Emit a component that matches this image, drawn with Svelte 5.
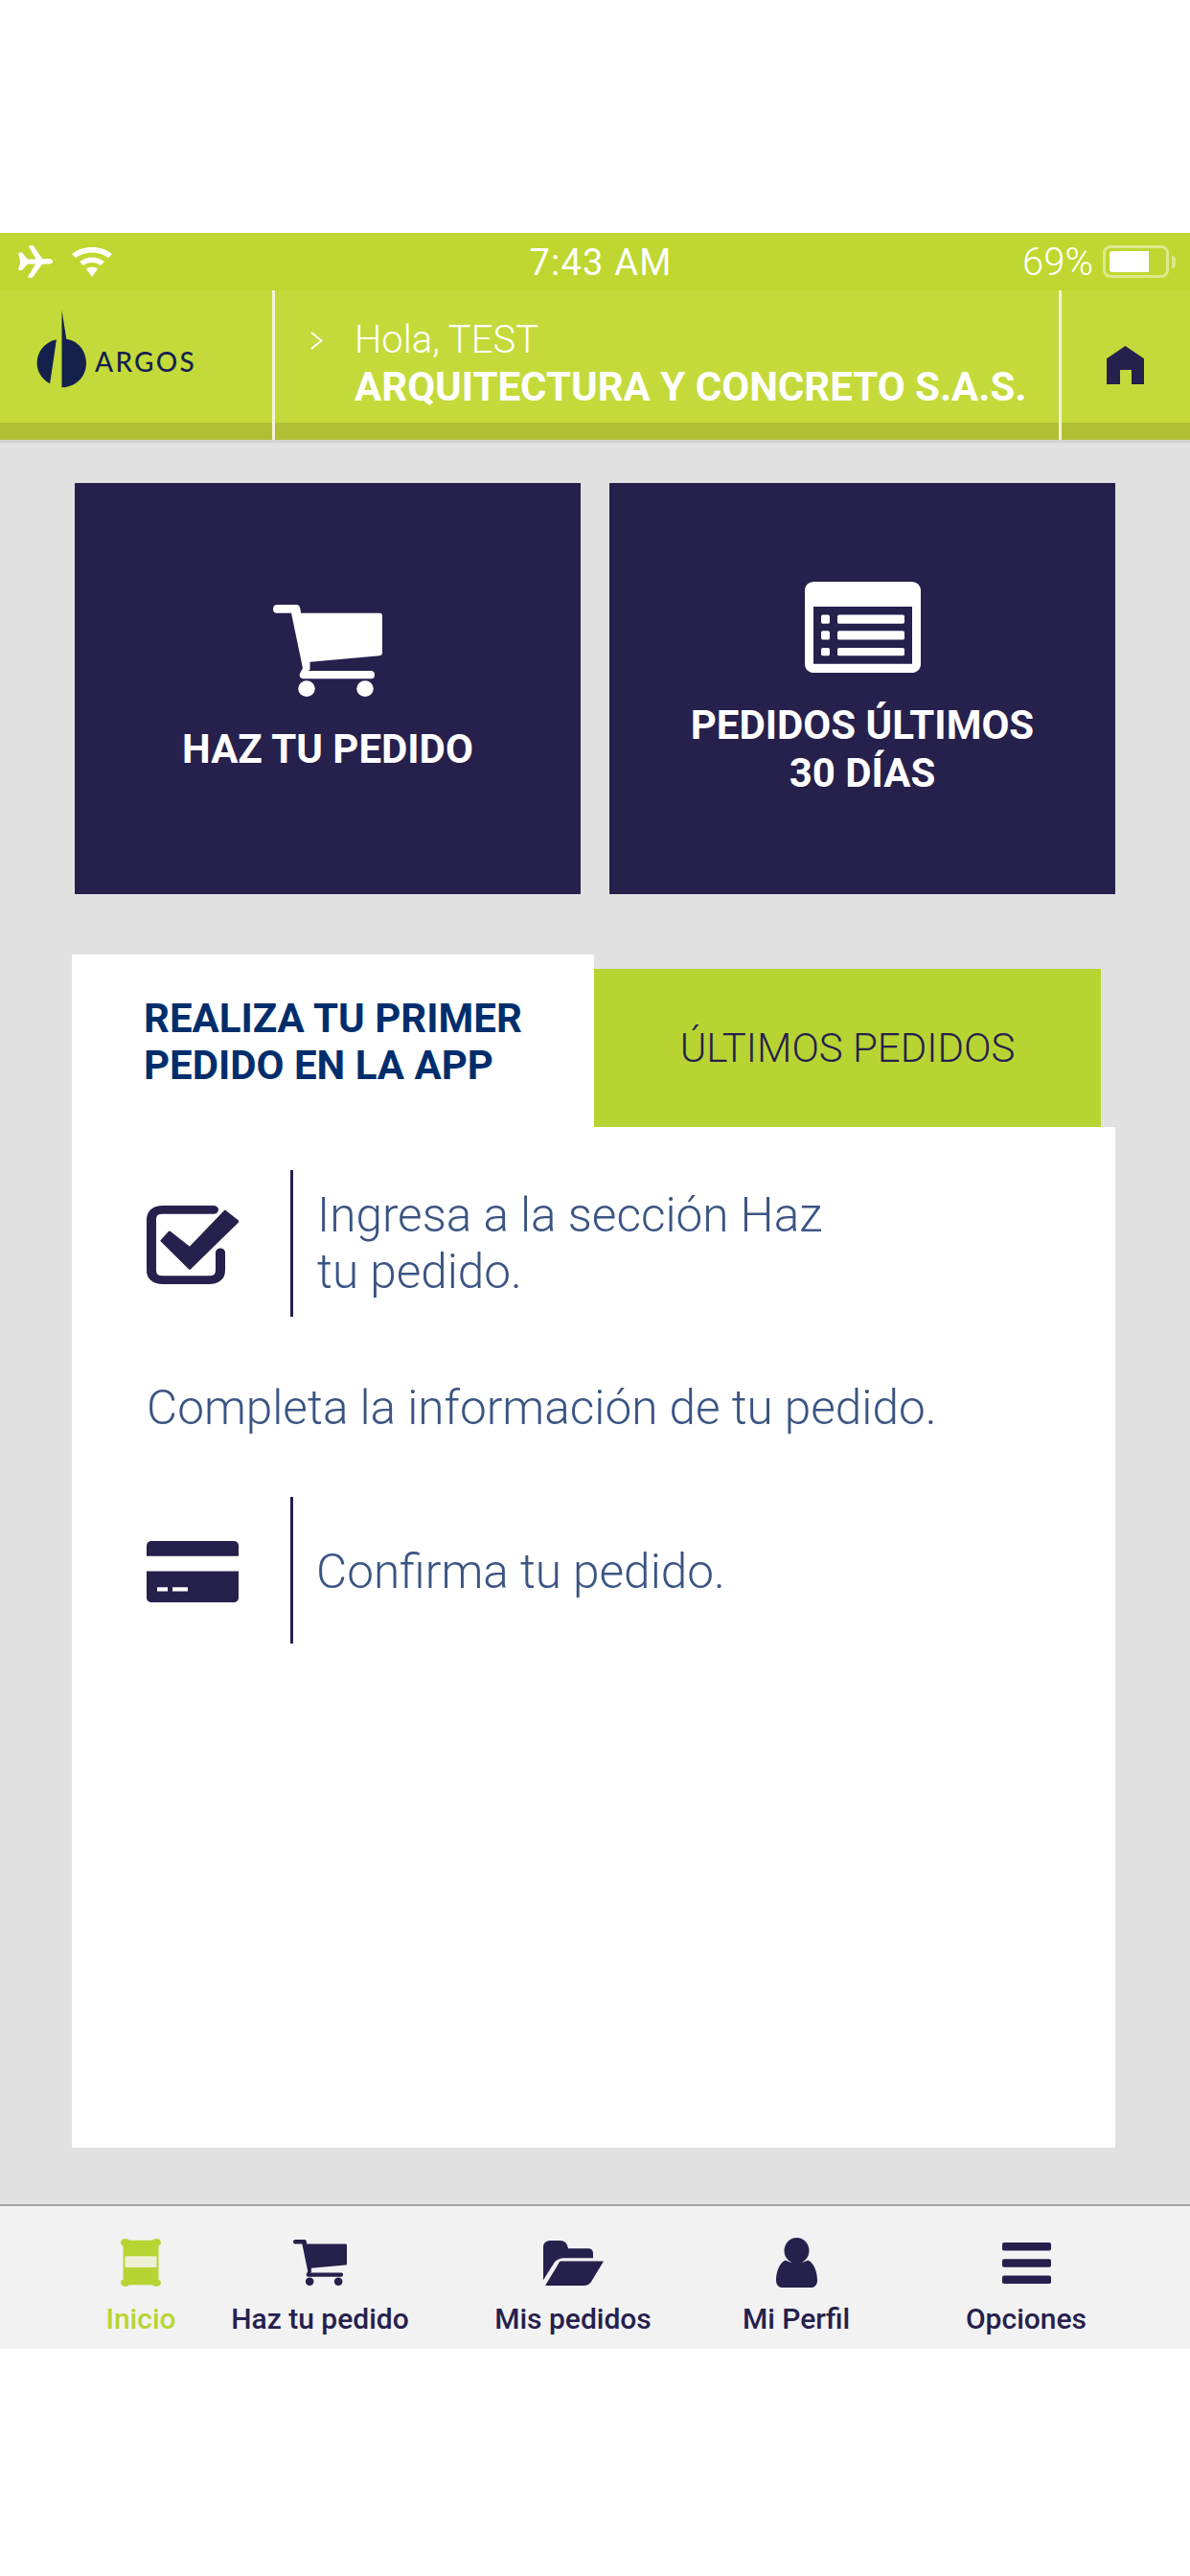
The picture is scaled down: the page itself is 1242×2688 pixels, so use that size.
<script>
  const tabs = [
    { label: 'Inicio', icon: 'bag', active: true },
    { label: 'Haz tu pedido', icon: 'cart' },
    { label: 'Mis pedidos', icon: 'folder' },
    { label: 'Mi Perfil', icon: 'user' },
    { label: 'Opciones', icon: 'menu' }
  ];
</script>

{#snippet cartIcon(cls)}
  <svg class={cls} viewBox="0 0 114 103" preserveAspectRatio="none" aria-hidden="true">
    <path fill="currentColor" d="M4 0H24C27 0 28 2 28.500 5L29 9.500H111C113 9.500 114 11 114 12.500V54C114 56 113 56.500 111 57L38.500 64V73L36 74H102C105 74 106 76 106 78.500C106 81 105 83 102 83H33C28 83 26.500 80 28.500 76L31 71L19 9.500H4C1.500 9.500 0 7.500 0 4.800C0 2 1.500 0 4 0Z"/>
    <ellipse fill="currentColor" cx="35" cy="94" rx="8.800" ry="9"/>
    <ellipse fill="currentColor" cx="96" cy="94" rx="8.800" ry="9"/>
  </svg>
{/snippet}

<div class="screen">
  <div class="top-blank"></div>

  <div class="status">
    <div class="status-left">
      <svg class="plane" viewBox="0 0 38 40" preserveAspectRatio="none" aria-hidden="true">
        <path fill="#fff" d="M1 9.500L5 8.500L11 17H20L12 0.500L17 0L27 16.500H34C36.500 16.500 38 18 38 19.800C38 21.800 36.500 23 34 23H27L16 40L11 39.500L19.500 23H11L5 31L1 30L3.500 20Z"/>
      </svg>
      <svg class="wifi" viewBox="0 0 42 37" preserveAspectRatio="none" aria-hidden="true">
        <path fill="#fff" d="M21 0C29 0 36.500 3 42 8.500L38 13.500C33.500 9 27.500 6.500 21 6.500C14.500 6.500 8.500 9 4 13.500L0 8.500C5.500 3 13 0 21 0Z"/>
        <path fill="#fff" d="M21 12.500C26 12.500 30.500 14.500 34 18L30 22.800C27.500 20.300 24.500 19 21 19C17.500 19 14.500 20.300 12 22.800L8 18C11.500 14.500 16 12.500 21 12.500Z"/>
        <path fill="#fff" d="M21 24.500C23.500 24.500 25.500 25.500 27 27L21 37L15 27C16.500 25.500 18.500 24.500 21 24.500Z"/>
      </svg>
    </div>
    <div class="time">7:43 AM</div>
    <div class="status-right">
      <span class="pct">69%</span>
      <span class="battery"><span class="battery-fill"></span></span>
      <span class="nub"></span>
    </div>
  </div>

  <header class="header">
    <div class="logo">
      <svg class="mark" viewBox="95 275 138 252" preserveAspectRatio="none" aria-hidden="true">
        <path fill="#14214d" d="M164 280L176 370C205 375 228 405 228 445C228 490 200 520 164 522Z"/>
        <path fill="#14214d" d="M150 372L133 510C110 495 99 470 99 445C99 410 120 380 150 372Z"/>
      </svg>
      <span class="wordmark">ARGOS</span>
    </div>
    <div class="greeting">
      <svg class="chev" viewBox="0 0 13 19" preserveAspectRatio="none" aria-hidden="true">
        <path fill="none" stroke="#fff" stroke-width="2" d="M1 1L11.500 9.500L1 18"/>
      </svg>
      <div class="names">
        <div class="hola">Hola, TEST</div>
        <div class="company">ARQUITECTURA Y CONCRETO S.A.S.</div>
      </div>
    </div>
    <div class="home">
      <svg class="home-icon" viewBox="0 0 39 48" preserveAspectRatio="none" aria-hidden="true">
        <path fill="#26204c" d="M19.500 0L39 16V48H26V30H14V48H0V16Z"/>
      </svg>
    </div>
  </header>
  <div class="header-shadow"></div>

  <main class="content">
    <div class="cards">
      <div class="card">
        {@render cartIcon('card-cart')}
        <div class="card-label">HAZ TU PEDIDO</div>
      </div>
      <div class="card">
        <svg class="card-list" viewBox="0 0 121 102" preserveAspectRatio="none" aria-hidden="true">
          <path fill="#fff" fill-rule="evenodd" d="M10 0H111C117 0 121 4 121 10V92C121 98 117 102 111 102H10C4 102 0 98 0 92V10C0 4 4 0 10 0ZM9 28V92H112V28Z"/>
          <rect fill="#fff" x="17" y="37" width="9" height="10" rx="2"/>
          <rect fill="#fff" x="34" y="37" width="70" height="10" rx="2"/>
          <rect fill="#fff" x="17" y="55" width="9" height="10" rx="2"/>
          <rect fill="#fff" x="34" y="55" width="70" height="10" rx="2"/>
          <rect fill="#fff" x="17" y="74" width="9" height="9" rx="2"/>
          <rect fill="#fff" x="34" y="74" width="70" height="9" rx="2"/>
        </svg>
        <div class="card-label">PEDIDOS ÚLTIMOS<br />30 DÍAS</div>
      </div>
    </div>

    <div class="tabs">
      <div class="tab tab-active">REALIZA TU PRIMER<br />PEDIDO EN LA APP</div>
      <div class="tab tab-other">ÚLTIMOS PEDIDOS</div>
    </div>

    <section class="panel">
      <div class="step">
        <svg class="step-icon check" viewBox="0 0 96 94" preserveAspectRatio="none" aria-hidden="true">
          <path fill="none" stroke="#26204c" stroke-width="10" stroke-linecap="round" d="M70 5H17C9 5 5 9 5 17V77C5 85 9 89 17 89H65C73 89 77 85 77 77V56"/>
          <path fill="#26204c" stroke="#26204c" stroke-width="3" stroke-linejoin="round" d="M16 42L24 32L45 51L82 7L95 19L45 75Z"/>
        </svg>
        <div class="rule"></div>
        <p class="step-text">Ingresa a la sección Haz<br />tu pedido.</p>
      </div>
      <p class="step-plain">Completa la información de tu pedido.</p>
      <div class="step step-last">
        <svg class="step-icon pay" viewBox="0 0 96 73" preserveAspectRatio="none" aria-hidden="true">
          <path fill="#26204c" d="M6 0H90C94 0 96 2 96 6V18H0V6C0 2 2 0 6 0Z"/>
          <path fill="#26204c" fill-rule="evenodd" d="M0 36H96V67C96 71 94 73 90 73H6C2 73 0 71 0 67ZM11 55V60H22V55ZM27 55V60H43V55Z"/>
        </svg>
        <div class="rule"></div>
        <p class="step-text">Confirma tu pedido.</p>
      </div>
    </section>
  </main>

  <nav class="tabbar">
    {#each tabs as tab}
      <div class="nav-item" class:active={tab.active}>
        <div class="nav-icon">
          {#if tab.icon === 'bag'}
            <svg class="i-bag" viewBox="0 0 42 60" preserveAspectRatio="none" aria-hidden="true">
              <path fill="#b8d433" d="M5 0C7 0 8 1 9 2H33C34 1 35 0 37 0C40 0 42 2 42 5C42 7 41 8 39.500 9V51C41 52 42 53 42 55C42 58 40 60 37 60C35 60 34 59 33 58H9C8 59 7 60 5 60C2 60 0 58 0 55C0 53 1 52 2.500 51V9C1 8 0 7 0 5C0 2 2 0 5 0Z"/>
              <rect fill="#eef0d6" x="4.500" y="22" width="33" height="14"/>
            </svg>
          {:else if tab.icon === 'cart'}
            {@render cartIcon('i-cart')}
          {:else if tab.icon === 'folder'}
            <svg class="i-folder" viewBox="0 0 63 57" preserveAspectRatio="none" aria-hidden="true">
              <path fill="#26204c" d="M0 50V8C0 3 3 0 8 0H17C21 0 24 2 25 6L26 10H47C50 10 52 12 52 16V22H22C17 22 14 24 12 27Z"/>
              <path fill="#26204c" d="M18 26H63L50 52C48 55 46 57 42 57H2L16 29C16.500 27.500 17 26.500 18 26Z"/>
            </svg>
          {:else if tab.icon === 'user'}
            <svg class="i-user" viewBox="0 0 43 62" preserveAspectRatio="none" aria-hidden="true">
              <ellipse fill="#26204c" cx="21.500" cy="16" rx="13" ry="16"/>
              <path fill="#26204c" d="M10 28C14 32 29 32 33 28C39 30 43 42 43 53C43 58 41 62 36 62H7C2 62 0 58 0 53C0 42 4 30 10 28Z"/>
            </svg>
          {:else}
            <svg class="i-menu" viewBox="0 0 51 51" preserveAspectRatio="none" aria-hidden="true">
              <rect fill="#26204c" width="51" height="10" rx="2"/>
              <rect fill="#26204c" y="20.500" width="51" height="10" rx="2"/>
              <rect fill="#26204c" y="41" width="51" height="10" rx="2"/>
            </svg>
          {/if}
        </div>
        <div class="nav-label">{tab.label}</div>
      </div>
    {/each}
  </nav>
  <div class="bottom-blank"></div>
</div>

<style>
  :global(body) { margin: 0; background: #fff; }
  :global(*) { box-sizing: border-box; }
  .screen { width: 1242px; height: 2688px; display: flex; flex-direction: column; font-family: Roboto, "Liberation Sans", sans-serif; overflow: hidden; }
  .top-blank { height: 243px; background: #fff; flex: none; }
  .bottom-blank { flex: 1; background: #fff; }

  .status { height: 60px; flex: none; background: #bfd730; display: flex; align-items: center; position: relative; color: #fff; padding: 0 15px 0 18px; justify-content: space-between; }
  .status-left { display: flex; align-items: center; gap: 20px; }
  .plane { width: 37px; height: 34px; display: block; }
  .wifi { width: 42px; height: 31px; display: block; }
  .time { position: absolute; left: 12px; right: 0; top: 9px; text-align: center; font-size: 38px; letter-spacing: 1.2px; }
  .status-right { display: flex; align-items: center; position: relative; z-index: 1; }
  .pct { font-size: 40px; font-weight: 300; margin: 1px 10px 0 0; }
  .battery { width: 69px; height: 34px; border: 3px solid rgba(255, 255, 255, 0.45); border-radius: 8px; padding: 3px 4px; display: flex; }
  .battery-fill { width: 41px; background: #fff; border-radius: 3px 0 0 3px; }
  .nub { width: 4px; height: 13px; margin-left: 3px; background: rgba(255, 255, 255, 0.45); border-radius: 0 4px 4px 0; }

  .header { height: 156px; flex: none; display: flex; background: linear-gradient(#c4da3b 138px, #afc035 138px); }
  .logo { width: 284px; flex: none; display: flex; padding: 19px 0 0 37px; }
  .mark { width: 55px; height: 84px; flex: none; }
  .wordmark { font-family: Lato, sans-serif; font-weight: 500; font-size: 28px; letter-spacing: 2.3px; color: #14214d; margin: 37px 0 0 7px; line-height: 36px; height: 36px; }
  .greeting { flex: none; width: 824px; border-left: 3px solid #f2f5da; border-right: 3px solid #f2f5da; display: flex; padding: 28px 0 0 37px; color: #fff; }
  .chev { width: 13px; height: 19px; margin-top: 15px; flex: none; }
  .names { margin-left: 33px; white-space: nowrap; }
  .hola { font-size: 40px; font-weight: 300; line-height: 48px; }
  .company { font-size: 42px; font-weight: 700; line-height: 49px; }
  .home { flex: 1; padding: 58px 0 0 47px; }
  .home-icon { width: 39px; height: 40px; display: block; }
  .header-shadow { height: 3px; background: #d2d2d2; flex: none; }

  .content { height: 1838px; background: #e1e1e1; padding: 42px 0 0 75px; flex: none; }
  .cards { display: flex; gap: 30px; padding: 0 0 0 3px; }
  .card { width: 528px; height: 429px; background: #26204c; color: #fff; display: flex; flex-direction: column; align-items: center; }
  .card :global(.card-cart) { width: 114px; height: 96px; margin-top: 127px; color: #fff; display: block; }
  .card-list { width: 121px; height: 95px; margin-top: 103px; display: block; }
  .card-label { font-size: 42px; font-weight: 700; text-align: center; line-height: 50px; margin-top: 30px; }

  .tabs { display: flex; align-items: flex-end; margin-top: 63px; }
  .tab-active { width: 545px; height: 180px; background: #fff; color: #002e6d; font-weight: 700; font-size: 42px; line-height: 49px; padding: 42px 0 0 75px; }
  .tab-other { width: 529px; height: 165px; background: #b8d433; color: #26204c; font-weight: 300; font-size: 42px; display: flex; align-items: center; justify-content: center; }

  .panel { width: 1089px; height: 1065px; background: #fff; padding-top: 45px; }
  .step { display: flex; align-items: center; height: 153px; padding-left: 78px; }
  .step-icon { width: 96px; flex: none; display: block; margin-top: 3px; }
  .check { height: 82px; }
  .pay { height: 64px; }
  .rule { width: 3px; height: 153px; background: #26204c; margin: 0 25px 0 54px; flex: none; }
  .step-text { margin: 0; font-size: 49.5px; font-weight: 300; color: #3a5583; line-height: 59px; }
  .step-plain { font-size: 49.5px; font-weight: 300; color: #3a5583; line-height: 58px; padding-left: 78px; margin: 66px 0 0; }
  .step-last { margin-top: 64px; }
  .step-last .step-text { margin: 3px 0 0 -1px; }

  .tabbar { height: 151px; background: #f2f2f3; border-top: 2px solid #a3a3a3; flex: none; display: grid; grid-template-columns: 160px 214px 314px 152px 328px; padding-left: 67px; }
  .nav-item { display: flex; flex-direction: column; align-items: center; color: #26204c; }
  .nav-item.active { color: #b8d433; }
  .nav-icon { height: 52px; margin-top: 33px; display: flex; align-items: center; justify-content: center; }
  .nav-label { font-size: 30px; font-weight: 500; margin-top: 15px; line-height: 36px; white-space: nowrap; }
  .i-bag { width: 42px; height: 50px; }
  .nav-icon :global(.i-cart) { width: 56px; height: 48px; color: #26204c; }
  .i-folder { width: 63px; height: 47px; }
  .i-user { width: 43px; height: 52px; }
  .i-menu { width: 51px; height: 43px; }
</style>
